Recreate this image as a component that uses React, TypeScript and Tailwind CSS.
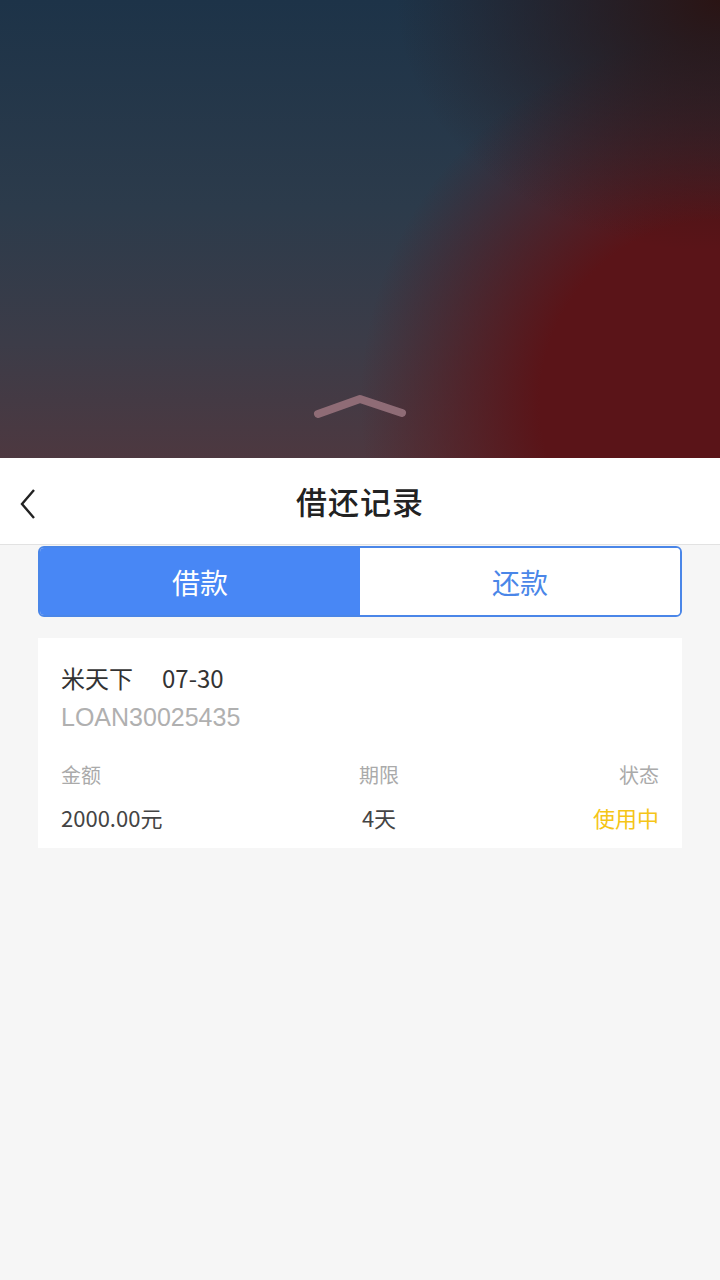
const font = "font-['Noto_Sans_CJK_SC','Noto_Sans',sans-serif]"

/**
 * Blurred wallpaper area shown above the sheet, with the pull-up handle
 */
function Backdrop() {
  return (
    <div className="relative h-[458px] w-full bg-[radial-gradient(ellipse_45%_55%_at_100%_0%,#2a1414_0%,rgba(42,20,20,0)_100%),radial-gradient(ellipse_50%_80%_at_100%_88%,#5a1418_50%,rgba(90,20,24,0)_100%),linear-gradient(180deg,#1d3348_0%,#2c3b4b_45%,#3c3c48_75%,#4d3840_100%)]">
      <div className="absolute bottom-[36px] left-0 right-0 flex justify-center">
        <svg width="96" height="28" viewBox="0 0 96 28">
          <path
            d="M6 20 L48 5 L90 19"
            fill="none"
            stroke="#8f6c76"
            strokeWidth="8"
            strokeLinecap="round"
            strokeLinejoin="round"
          />
        </svg>
      </div>
    </div>
  )
}

export default function App() {
  return (
    <div className={`${font} w-[720px] min-h-[1280px] bg-[#f6f6f6] flex flex-col`}>
      <Backdrop />

      {/* Header */}
      <div className="relative h-[87px] bg-white border-b border-[#e2e2e2] flex items-center justify-center">
        <button className="absolute left-[14px] top-[26px] p-1" aria-label="back">
          <svg width="24" height="32" viewBox="0 0 24 32">
            <path d="M16 2 L4 16 L16 30" fill="none" stroke="#222" strokeWidth="2.4" />
          </svg>
        </button>
        <h1 className="text-[31px] font-medium text-[#222] tracking-[1px]">借还记录</h1>
      </div>

      {/* Tabs */}
      <div className="mx-[38px] mt-[1px] h-[71px] flex rounded-[6px] border-2 border-[#4a86e8] overflow-hidden">
        <div className="flex-1 bg-[#4887f5] flex items-center justify-center text-white text-[28px]">借款</div>
        <div className="flex-1 bg-white flex items-center justify-center text-[#4a86e8] text-[28px]">还款</div>
      </div>

      {/* Record card */}
      <div className="mx-[38px] mt-[21px] bg-white px-[23px] pt-[22px] pb-[14px]">
        <div className="text-[24px] leading-[36px] text-[#333]">
          米天下<span className="ml-[29px]">07-30</span>
        </div>
        <div className="mt-[2px] text-[25px] leading-[38px] text-[#b0b0b0] font-['Liberation_Sans',sans-serif]">LOAN30025435</div>
        <div className="mt-[24px] grid grid-cols-3 text-[20px] leading-[30px] text-[#aaa]">
          <span>金额</span>
          <span className="text-center pl-[38px]">期限</span>
          <span className="text-right">状态</span>
        </div>
        <div className="mt-[10px] grid grid-cols-3 text-[22px] leading-[34px] text-[#444]">
          <span>2000.00元</span>
          <span className="text-center pl-[38px]">4天</span>
          <span className="text-right text-[#f5c518]">使用中</span>
        </div>
      </div>
    </div>
  )
}
